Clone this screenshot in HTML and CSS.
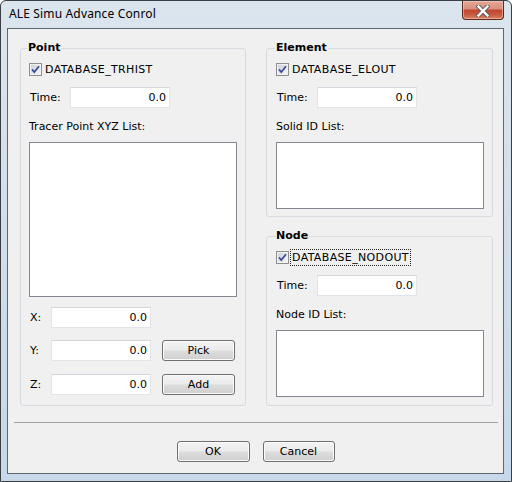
FILE: index.html
```html
<!DOCTYPE html>
<html>
<head>
<meta charset="utf-8">
<title>ALE Simu Advance Conrol</title>
<link rel="stylesheet" href="styles.css">
</head>
<body>
<div class="window">
  <div class="titlebar">
    <span class="title">ALE Simu Advance Conrol</span>
    <div class="close">
      <svg width="14" height="12" viewBox="0 0 14 12">
        <path d="M2.5 1.5 L11.5 10.5 M11.5 1.5 L2.5 10.5" stroke="#5b5b5b" stroke-width="4.2" stroke-linecap="square" fill="none"/>
        <path d="M2.5 1.5 L11.5 10.5 M11.5 1.5 L2.5 10.5" stroke="#ffffff" stroke-width="2.4" stroke-linecap="square" fill="none"/>
      </svg>
    </div>
  </div>
  <div class="client">
    <div class="columns">
      <div class="group point">
        <div class="group-title">Point</div>
        <label class="check">
          <span class="box"><svg width="11" height="11" viewBox="0 0 11 11"><path d="M2 5.3 L4.3 8 L9 2.3" fill="none" stroke="#3a4f9c" stroke-width="1.8"/></svg></span>
          <span class="check-text">DATABASE_TRHIST</span>
        </label>
        <div class="field">
          <span class="lbl">Time:</span>
          <div class="input">0.0</div>
        </div>
        <div class="caption">Tracer Point XYZ List:</div>
        <div class="listbox tall"></div>
        <div class="field coord first">
          <span class="lbl short">X:</span>
          <div class="input">0.0</div>
        </div>
        <div class="field coord second">
          <span class="lbl short">Y:</span>
          <div class="input">0.0</div>
          <button class="btn side">Pick</button>
        </div>
        <div class="field coord third">
          <span class="lbl short">Z:</span>
          <div class="input">0.0</div>
          <button class="btn side">Add</button>
        </div>
      </div>
      <div class="right-col">
        <div class="group side-group">
          <div class="group-title">Element</div>
          <label class="check">
            <span class="box"><svg width="11" height="11" viewBox="0 0 11 11"><path d="M2 5.3 L4.3 8 L9 2.3" fill="none" stroke="#3a4f9c" stroke-width="1.8"/></svg></span>
            <span class="check-text">DATABASE_ELOUT</span>
          </label>
          <div class="field">
            <span class="lbl">Time:</span>
            <div class="input">0.0</div>
          </div>
          <div class="caption">Solid ID List:</div>
          <div class="listbox short-list"></div>
        </div>
        <div class="group side-group node">
          <div class="group-title">Node</div>
          <label class="check">
            <span class="box"><svg width="11" height="11" viewBox="0 0 11 11"><path d="M2 5.3 L4.3 8 L9 2.3" fill="none" stroke="#3a4f9c" stroke-width="1.8"/></svg></span>
            <span class="check-text focused">DATABASE_NODOUT</span>
          </label>
          <div class="field">
            <span class="lbl">Time:</span>
            <div class="input">0.0</div>
          </div>
          <div class="caption">Node ID List:</div>
          <div class="listbox short-list"></div>
        </div>
      </div>
    </div>
    <div class="separator"></div>
    <div class="buttons">
      <button class="btn ok">OK</button>
      <button class="btn cancel">Cancel</button>
    </div>
  </div>
</div>
</body>
</html>
```
FILE: styles.css
```css
* { box-sizing: border-box; }

html, body {
  margin: 0;
  padding: 0;
  background: #ffffff;
}

body {
  font-family: "DejaVu Sans", "Liberation Sans", sans-serif;
  font-size: 11px;
  line-height: 13px;
  color: #000;
}

.window {
  width: 512px;
  height: 482px;
  border: 1px solid #3a3f45;
  border-radius: 6px 6px 0 0;
  background: linear-gradient(to bottom, #dbe5ee 0%, #d3dfea 40%, #c6d8ea 100%);
  padding: 0 7px 7px 6px;
  display: flex;
  flex-direction: column;
}

.titlebar {
  height: 27px;
  display: flex;
  justify-content: space-between;
  align-items: flex-start;
}

.title {
  font-family: "Noto Sans", "DejaVu Sans", sans-serif;
  font-size: 12px;
  line-height: 16px;
  padding-top: 5px;
  padding-left: 2px;
  color: #000;
  letter-spacing: 0.15px;
}

.close {
  width: 42px;
  height: 19px;
  margin-top: 0;
  border: 1px solid #5c2a20;
  border-top: none;
  border-radius: 0 0 4px 4px;
  background: linear-gradient(to bottom, #e4a898 0%, #d98f7d 45%, #c2442e 50%, #c95a3f 75%, #dc8261 100%);
  box-shadow: inset 0 0 0 1px rgba(255, 220, 210, 0.45);
  display: flex;
  align-items: center;
  justify-content: center;
}

.close svg { display: block; margin-top: 1px; }

.client {
  flex: 1;
  border: 1px solid #5d6873;
  background: #f0f0f0;
  display: flex;
  flex-direction: column;
}

.columns {
  display: flex;
  gap: 20px;
  padding: 19px 10px 0 12px;
}

.group {
  border: 1px solid #d5dbe1;
  border-radius: 3px;
  display: flex;
  flex-direction: column;
}

.point {
  width: 226px;
  padding: 0 0 10px 8px;
}

.right-col {
  width: 227px;
  display: flex;
  flex-direction: column;
  gap: 19px;
}

.side-group {
  padding: 0 0 7px 9px;
}

.node { flex: 1; }

.group-title {
  margin-top: -8px;
  margin-left: -2px;
  padding: 0 1px;
  align-self: flex-start;
  background: #f0f0f0;
  font-weight: bold;
  height: 13px;
}

.side-group .group-title { margin-left: -1px; }

.check {
  margin-top: 9px;
  height: 13px;
  display: flex;
  align-items: center;
  gap: 3px;
}

.box {
  width: 13px;
  height: 13px;
  border: 1px solid #8e8f8f;
  background: linear-gradient(135deg, #cbced4 0%, #e6e7ea 55%, #f8f8f8 100%);
  box-shadow: inset 0 0 0 1px #f3f3f3;
  display: flex;
  align-items: center;
  justify-content: center;
}

.box svg { display: block; }

.check-text {
  letter-spacing: 0.35px;
  line-height: 13px;
}

.focused {
  outline: 1px dotted #222;
  outline-offset: 1px;
}

.field {
  margin-top: 11px;
  height: 21px;
  display: flex;
  align-items: center;
}

.lbl {
  width: 41px;
  padding-left: 1px;
}

.lbl.short { width: 22px; }

.input {
  width: 100px;
  height: 21px;
  border: 1px solid #e1e4e9;
  border-top-color: #d3d6dc;
  background: #ffffff;
  text-align: right;
  padding-right: 3px;
  line-height: 19px;
}

.caption {
  margin-top: 12px;
  height: 13px;
}

.listbox {
  margin-top: 9px;
  width: 208px;
  border: 1px solid #828790;
  background: #ffffff;
}

.listbox.tall { height: 155px; }
.listbox.short-list { height: 67px; }

.coord.first { margin-top: 10px; }
.coord.second { margin-top: 12px; }
.coord.third { margin-top: 13px; }

.btn {
  font-family: "DejaVu Sans", "Liberation Sans", sans-serif;
  font-size: 11px;
  line-height: 13px;
  color: #000;
  height: 21px;
  border: 1px solid #707070;
  border-radius: 3px;
  background: linear-gradient(to bottom, #f3f3f3 0%, #ebebeb 48%, #dddddd 52%, #cfcfcf 100%);
  box-shadow: inset 0 0 0 1px #fbfbfb;
  padding: 0;
  margin: 0;
}

.btn.side {
  width: 73px;
  margin-left: 11px;
}

.separator {
  margin: 16px 5px 0 6px;
  height: 1px;
  background: #a0a0a0;
}

.buttons {
  margin-top: 18px;
  display: flex;
  justify-content: center;
  gap: 13px;
}

.btn.ok { width: 73px; }
.btn.cancel { width: 72px; }
```
